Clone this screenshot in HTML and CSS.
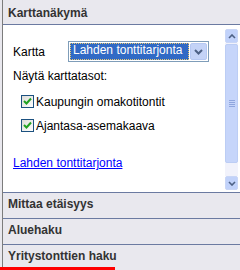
FILE: index.html
```html
<!DOCTYPE html>
<html lang="fi">
<head>
  <meta charset="UTF-8" />
  <title>Karttanäkymä</title>
  <link rel="stylesheet" href="styles.css">
</head>
<body>
  <div class="panel">
    <div class="panel-head">Karttanäkymä</div>
    <div class="panel-body">
      <div class="panel-main">
        <div class="row">
          <label class="row-label">Kartta</label>
          <div class="select">
            <span class="select-value">Lahden tonttitarjonta</span>
            <span class="select-btn">
              <svg width="9" height="6" viewBox="0 0 9 6"><path d="M1 1 L4.5 4.5 L8 1" fill="none" stroke="#4d6185" stroke-width="2"/></svg>
            </span>
          </div>
        </div>
        <div class="layers-title">Näytä karttatasot:</div>
        <div class="layer">
          <span class="check"><svg width="9" height="9" viewBox="0 0 9 9"><path d="M1 4 L3.5 6.5 L8 1.5" fill="none" stroke="#21a121" stroke-width="2"/></svg></span>
          Kaupungin omakotitontit
        </div>
        <div class="layer">
          <span class="check"><svg width="9" height="9" viewBox="0 0 9 9"><path d="M1 4 L3.5 6.5 L8 1.5" fill="none" stroke="#21a121" stroke-width="2"/></svg></span>
          Ajantasa-asemakaava
        </div>
        <a class="link" href="#">Lahden tonttitarjonta</a>
      </div>
      <div class="scrollbar">
        <div class="sb-btn">
          <svg width="8" height="5" viewBox="0 0 8 5"><path d="M1 4 L4 1 L7 4" fill="none" stroke="#4d6185" stroke-width="1.6"/></svg>
        </div>
        <div class="sb-track">
          <div class="sb-thumb">
            <span class="grip"></span>
            <span class="grip"></span>
            <span class="grip"></span>
            <span class="grip"></span>
          </div>
        </div>
        <div class="sb-btn">
          <svg width="8" height="5" viewBox="0 0 8 5"><path d="M1 1 L4 4 L7 1" fill="none" stroke="#4d6185" stroke-width="1.6"/></svg>
        </div>
      </div>
    </div>
    <div class="section">Mittaa etäisyys</div>
    <div class="section">Aluehaku</div>
    <div class="section">Yritystonttien haku</div>
  </div>
  <div class="active-bar"></div>
</body>
</html>
```

FILE: styles.css
```css
body {
  margin: 0;
  width: 240px;
  height: 270px;
  overflow: hidden;
  background-color: #e9e8ee;
  font-family: "Liberation Sans", Arial, sans-serif;
  font-size: 12px;
  line-height: 14px;
  color: #000;
}

.panel {
  margin-left: 2px;
  border-left: 1px solid #7c7c7c;
}

.panel-head {
  height: 25px;
  box-sizing: border-box;
  padding: 6px 5px 0;
  font-weight: bold;
  color: #333;
  border-bottom: 1px solid #6b7aa1;
}

.panel-body {
  display: flex;
  height: 167px;
  background-color: #fff;
}

.panel-main {
  flex: 1;
  padding: 16px 0 0 10px;
}

.row {
  display: flex;
  align-items: center;
  height: 21px;
}

.row-label {
  width: 55px;
}

.select {
  display: flex;
  width: 141px;
  height: 21px;
  box-sizing: border-box;
  padding: 1px;
  border: 1px solid #7f9db9;
}

.select-value {
  flex: 1;
  padding-left: 3px;
  line-height: 15px;
  color: #fff;
  background-color: #316ac5;
  outline: 1px dotted #e8c870;
  outline-offset: -1px;
}

.select-btn {
  width: 15px;
  margin-left: 1px;
  display: flex;
  align-items: center;
  justify-content: center;
  border: 1px solid #b6c8f2;
  border-radius: 2px;
  background-color: #c4d3f7;
}

.layers-title {
  margin-top: 7px;
}

.layer {
  display: flex;
  align-items: center;
  height: 13px;
  margin-top: 12px;
  padding-left: 8px;
}

.layer + .layer {
  margin-top: 11px;
}

.check {
  width: 11px;
  height: 11px;
  margin-right: 2px;
  display: flex;
  align-items: center;
  justify-content: center;
  border: 1px solid #1c5180;
  background: linear-gradient(135deg, #dcdcd7, #fff);
}

.link {
  display: block;
  width: fit-content;
  margin-top: 24px;
  color: #0000ff;
}

.scrollbar {
  width: 13px;
  margin: 4px 2px 2px 0;
  display: flex;
  flex-direction: column;
}

.sb-btn {
  height: 14px;
  box-sizing: border-box;
  display: flex;
  align-items: center;
  justify-content: center;
  border: 1px solid #c9d6f6;
  border-radius: 2px;
  background-color: #c1d2fa;
}

.sb-track {
  flex: 1;
  background-color: #f1f2fb;
}

.sb-thumb {
  height: 119px;
  margin-top: 1px;
  box-sizing: border-box;
  display: flex;
  flex-direction: column;
  align-items: center;
  justify-content: center;
  gap: 1px;
  border: 1px solid #bccdf4;
  border-radius: 2px;
  background-color: #c6d5fa;
}

.grip {
  width: 6px;
  height: 1px;
  background-color: #8fa6de;
}

.section {
  height: 26px;
  box-sizing: border-box;
  padding: 4px 5px 0;
  font-weight: bold;
  color: #333;
  border-top: 1px solid #6b7aa1;
}

.active-bar {
  width: 115px;
  height: 3px;
  margin-top: -3px;
  position: relative;
  background-color: #f00;
}
```
